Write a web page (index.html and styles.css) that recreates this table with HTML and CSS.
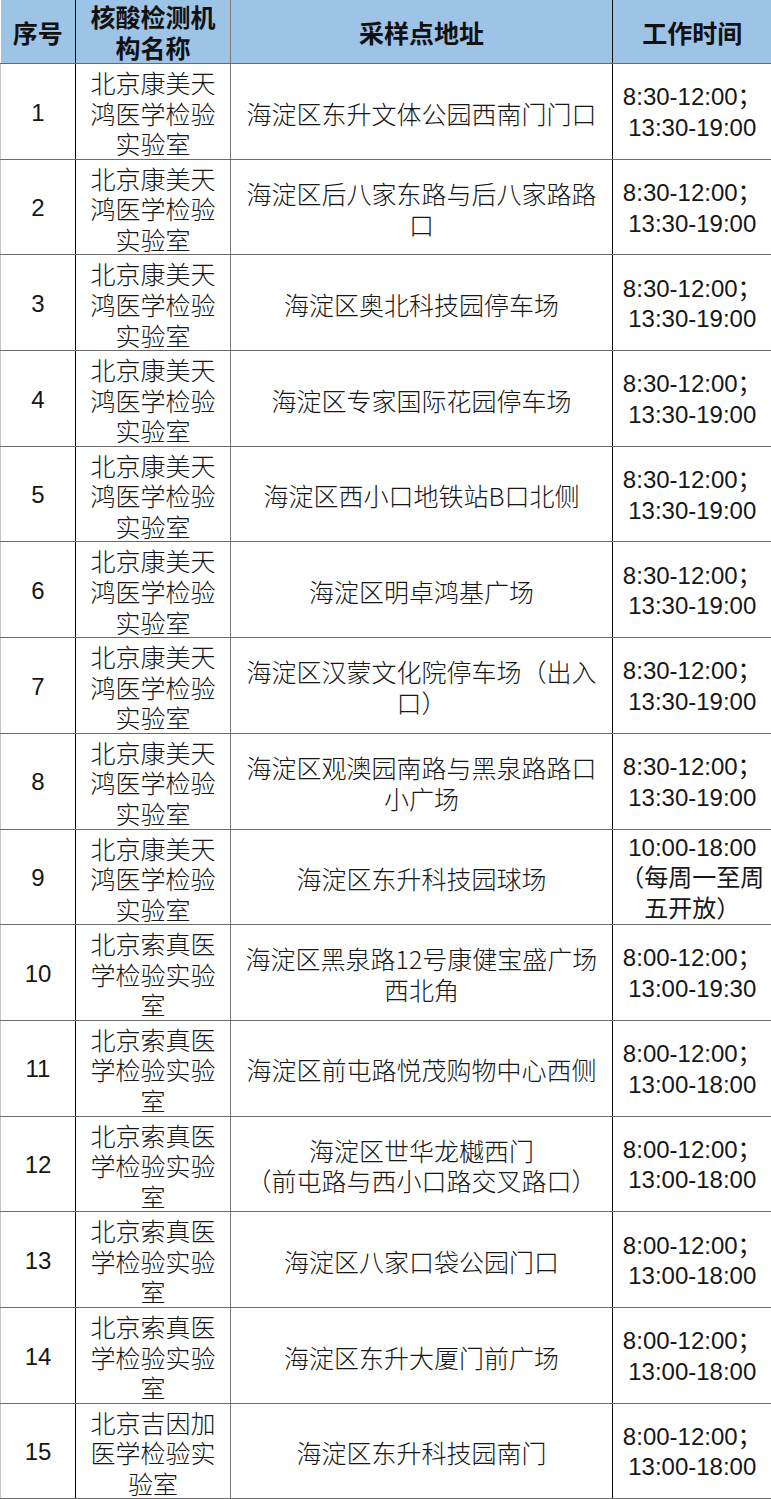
FILE: index.html
```html
<!DOCTYPE html>
<html lang="zh-CN">
<head>
<meta charset="utf-8">
<title>核酸检测采样点</title>
<link rel="stylesheet" href="styles.css">
</head>
<body>
<table class="sheet">
  <colgroup>
    <col class="c-no">
    <col class="c-org">
    <col class="c-addr">
    <col class="c-time">
  </colgroup>
  <thead>
    <tr>
      <th class="no">序号</th>
      <th class="org">核酸检测机构名称</th>
      <th class="addr">采样点地址</th>
      <th class="time">工作时间</th>
    </tr>
  </thead>
  <tbody>
    <tr><td class="no">1</td><td class="org">北京康美天鸿医学检验实验室</td><td class="addr">海淀区东升文体公园西南门门口</td><td class="time">8:30-12:00；13:30-19:00</td></tr>
    <tr><td class="no">2</td><td class="org">北京康美天鸿医学检验实验室</td><td class="addr">海淀区后八家东路与后八家路路口</td><td class="time">8:30-12:00；13:30-19:00</td></tr>
    <tr><td class="no">3</td><td class="org">北京康美天鸿医学检验实验室</td><td class="addr">海淀区奥北科技园停车场</td><td class="time">8:30-12:00；13:30-19:00</td></tr>
    <tr><td class="no">4</td><td class="org">北京康美天鸿医学检验实验室</td><td class="addr">海淀区专家国际花园停车场</td><td class="time">8:30-12:00；13:30-19:00</td></tr>
    <tr><td class="no">5</td><td class="org">北京康美天鸿医学检验实验室</td><td class="addr">海淀区西小口地铁站B口北侧</td><td class="time">8:30-12:00；13:30-19:00</td></tr>
    <tr><td class="no">6</td><td class="org">北京康美天鸿医学检验实验室</td><td class="addr">海淀区明卓鸿基广场</td><td class="time">8:30-12:00；13:30-19:00</td></tr>
    <tr><td class="no">7</td><td class="org">北京康美天鸿医学检验实验室</td><td class="addr">海淀区汉蒙文化院停车场（出入口）</td><td class="time">8:30-12:00；13:30-19:00</td></tr>
    <tr><td class="no">8</td><td class="org">北京康美天鸿医学检验实验室</td><td class="addr">海淀区观澳园南路与黑泉路路口小广场</td><td class="time">8:30-12:00；13:30-19:00</td></tr>
    <tr><td class="no">9</td><td class="org">北京康美天鸿医学检验实验室</td><td class="addr">海淀区东升科技园球场</td><td class="time">10:00-18:00<br>（每周一至周五开放）</td></tr>
    <tr><td class="no">10</td><td class="org">北京索真医学检验实验室</td><td class="addr">海淀区黑泉路12号康健宝盛广场西北角</td><td class="time">8:00-12:00；13:00-19:30</td></tr>
    <tr><td class="no">11</td><td class="org">北京索真医学检验实验室</td><td class="addr">海淀区前屯路悦茂购物中心西侧</td><td class="time">8:00-12:00；13:00-18:00</td></tr>
    <tr><td class="no">12</td><td class="org">北京索真医学检验实验室</td><td class="addr">海淀区世华龙樾西门<br>（前屯路与西小口路交叉路口）</td><td class="time">8:00-12:00；13:00-18:00</td></tr>
    <tr><td class="no">13</td><td class="org">北京索真医学检验实验室</td><td class="addr">海淀区八家口袋公园门口</td><td class="time">8:00-12:00；13:00-18:00</td></tr>
    <tr><td class="no">14</td><td class="org">北京索真医学检验实验室</td><td class="addr">海淀区东升大厦门前广场</td><td class="time">8:00-12:00；13:00-18:00</td></tr>
    <tr><td class="no">15</td><td class="org">北京吉因加医学检验实验室</td><td class="addr">海淀区东升科技园南门</td><td class="time">8:00-12:00；13:00-18:00</td></tr>
  </tbody>
</table>
</body>
</html>
```

FILE: styles.css
```css
html, body {
  margin: 0;
  padding: 0;
  background: #ffffff;
}

.sheet {
  width: 771px;
  table-layout: fixed;
  border-collapse: collapse;
  color: #161616;
  font-family: "Noto Sans CJK SC", "Liberation Sans", sans-serif;
  font-size: 25px;
}

.c-no { width: 75px; }
.c-org { width: 155px; }
.c-addr { width: 382px; }
.c-time { width: 159px; }

.sheet th,
.sheet td {
  text-align: center;
  vertical-align: middle;
  border-bottom: 1px solid #6b6b6b;
  word-break: break-all;
}

.sheet td {
  padding: 3px 8px 0;
  line-height: 30.57px;
  font-weight: 300;
}

.sheet th {
  padding: 1px 8px 0;
  line-height: 31px;
  background: #9dc3e6;
  font-weight: 700;
  color: #111111;
}

.sheet td.no {
  font-family: "Liberation Sans", "Noto Sans CJK SC", sans-serif;
  font-size: 24px;
  font-weight: 400;
  border-left: 1px solid #c6c6c6;
}

.sheet .no { border-right: 1px solid #000000; }
.sheet .org { border-right: 1px solid #7a7a7a; }
.sheet .addr { border-right: 1px solid #0d0d0d; }

.sheet td.time {
  font-family: "Liberation Sans", "Noto Sans CJK SC", sans-serif;
  font-size: 24px;
  font-weight: 400;
  padding: 3px 5px 0;
  word-break: normal;
}
```
